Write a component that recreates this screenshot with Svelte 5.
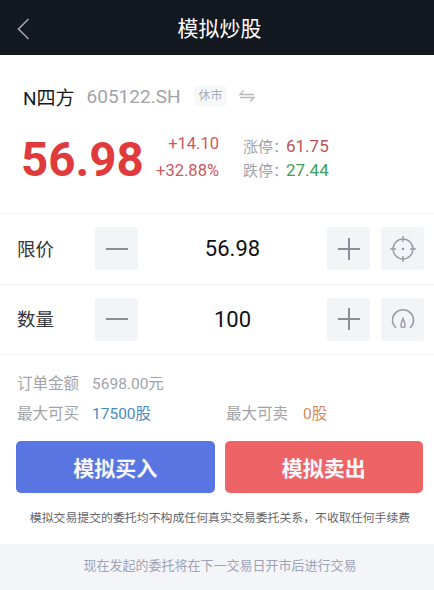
<script>
	let price = '56.98'
	let amount = '100'
</script>

<main>
	<header>
		<svg class="back" width="14" height="24" viewBox="0 0 14 24"><path d="M12.5 2 L2.5 12 L12.5 22" /></svg>
		<h1>模拟炒股</h1>
	</header>

	<section class="quote">
		<div class="name-row">
			<span class="name">N四方</span>
			<span class="code">605122.SH</span>
			<span class="tag">休市</span>
			<svg class="swap" width="16" height="14" viewBox="0 0 16 14"><path d="M5 1.5 L1 5.5 H15 M1 8.5 H15 L11 12.5" /></svg>
		</div>
		<div class="price-row">
			<div class="big">56.98</div>
			<div class="change">
				<span>+14.10</span>
				<span>+32.88%</span>
			</div>
			<div class="limits">
				<div>涨停：<b class="up">61.75</b></div>
				<div>跌停：<b class="down">27.44</b></div>
			</div>
		</div>
	</section>

	<section class="stepper">
		<span class="label">限价</span>
		<button class="sq" aria-label="minus"><svg width="24" height="24" viewBox="0 0 24 24"><path d="M1 12 H23" /></svg></button>
		<span class="value">{price}</span>
		<button class="sq" aria-label="plus"><svg width="24" height="24" viewBox="0 0 24 24"><path d="M1 12 H23 M12 1 V23" /></svg></button>
		<button class="sq extra" aria-label="target">
			<svg class="thin" width="28" height="28" viewBox="0 0 28 28">
				<circle cx="14" cy="14" r="10" />
				<path d="M14 1 V7 M14 21 V27 M1 14 H7 M21 14 H27" />
				<circle class="dot" cx="14" cy="14" r="1.3" />
			</svg>
		</button>
	</section>

	<section class="stepper">
		<span class="label">数量</span>
		<button class="sq" aria-label="minus"><svg width="24" height="24" viewBox="0 0 24 24"><path d="M1 12 H23" /></svg></button>
		<span class="value">{amount}</span>
		<button class="sq" aria-label="plus"><svg width="24" height="24" viewBox="0 0 24 24"><path d="M1 12 H23 M12 1 V23" /></svg></button>
		<button class="sq extra" aria-label="gauge">
			<svg class="thin" width="26" height="24" viewBox="0 0 26 24">
				<path d="M6 21 A10.5 10.5 0 1 1 20 21" />
				<path d="M13 11.5 C12 14 11 16 11 18.5 A2 2 0 0 0 15 18.5 C15 16 14 14 13 11.5 Z" />
			</svg>
		</button>
	</section>

	<section class="order">
		<div class="line"><span class="key">订单金额</span><span class="val">5698.00元</span></div>
		<div class="line">
			<div class="half"><span class="key">最大可买</span><span class="val blue">17500股</span></div>
			<div class="half"><span class="key">最大可卖</span><span class="val orange">0股</span></div>
		</div>
	</section>

	<div class="actions">
		<button class="act buy">模拟买入</button>
		<button class="act sell">模拟卖出</button>
	</div>

	<p class="note">模拟交易提交的委托均不构成任何真实交易委托关系，不收取任何手续费</p>

	<footer>现在发起的委托将在下一交易日开市后进行交易</footer>
</main>

<style>
	:global(body) {
		margin: 0;
		background: #fff;
	}
	main {
		width: 434px;
		height: 590px;
		overflow: hidden;
		font-family: Roboto, "Noto Sans CJK SC", sans-serif;
		color: #16191f;
	}
	section {
		box-sizing: border-box;
	}
	header {
		height: 55px;
		background: #141820;
		display: flex;
		align-items: center;
		justify-content: center;
		position: relative;
	}
	h1 {
		margin: -1px 0 0 5px;
		color: #fff;
		font-size: 21px;
		font-weight: 400;
	}
	.back {
		position: absolute;
		left: 16px;
		top: 17px;
	}
	.back path {
		fill: none;
		stroke: #a3a5a9;
		stroke-width: 1.6;
	}
	.quote {
		height: 159px;
		padding: 27px 0 0 23px;
		border-bottom: 1px solid #f3f4f6;
	}
	.name-row {
		display: flex;
		align-items: center;
		height: 28px;
	}
	.name {
		font-size: 19px;
	}
	.code {
		font-size: 19px;
		color: #a1a3a7;
		margin-left: 12px;
	}
	.tag {
		margin-left: 14px;
		background: #f7f8fa;
		color: #a8acb8;
		font-size: 12px;
		line-height: 20px;
		padding: 0 4px;
		border-radius: 2px;
	}
	.swap {
		margin-left: 12px;
	}
	.swap path {
		fill: none;
		stroke: #b6b8bd;
		stroke-width: 1.3;
	}
	.price-row {
		display: flex;
		margin-top: 13px;
		margin-left: -2px;
	}
	.big {
		font-size: 47.5px;
		font-weight: 700;
		color: #e13a3c;
		line-height: 58px;
		width: 132px;
		margin-top: 8px;
		white-space: nowrap;
	}
	.change {
		width: 66px;
		display: flex;
		flex-direction: column;
		align-items: flex-end;
		color: #c9595e;
		font-size: 16.5px;
		line-height: 27px;
		margin-top: 7px;
	}
	.limits {
		margin-left: 24px;
		font-size: 15px;
		line-height: 23px;
		color: #a1a3a7;
		margin-top: 12px;
		white-space: nowrap;
	}
	.limits b {
		font-weight: 400;
		font-size: 17px;
		margin-left: -2px;
	}
	.up {
		color: #bb5257;
	}
	.down {
		color: #3f9e5c;
	}
	.stepper {
		height: 70.5px;
		display: flex;
		align-items: center;
		padding-left: 17px;
		border-bottom: 1px solid #f3f4f6;
	}
	.label {
		width: 78px;
		font-size: 18.5px;
		color: #33363b;
		margin-top: -2px;
	}
	.sq {
		width: 43px;
		height: 43px;
		padding: 0;
		border: 0;
		border-radius: 3px;
		background: #f3f4f8;
		display: flex;
		align-items: center;
		justify-content: center;
	}
	.sq svg path {
		fill: none;
		stroke: #8b8e96;
		stroke-width: 2;
	}
	.sq svg.thin path,
	.sq svg.thin circle {
		fill: none;
		stroke: #9a9ca8;
		stroke-width: 1.5;
	}
	.sq svg.thin .dot {
		fill: #9a9ca8;
		stroke: none;
	}
	.value {
		width: 189px;
		text-align: center;
		font-size: 22px;
		color: #111;
	}
	.extra {
		margin-left: 11px;
	}
	.order {
		padding: 14px 17px 0;
		font-size: 15.5px;
		color: #a1a3a7;
	}
	.line {
		height: 30px;
		line-height: 30px;
		display: flex;
		white-space: nowrap;
	}
	.half {
		flex: none;
		width: 209px;
	}
	.key {
		margin-right: 13px;
	}
	.blue {
		color: #4a8ac0;
	}
	.orange {
		color: #d58a5f;
		margin-left: 2px;
	}
	.actions {
		display: flex;
		justify-content: space-between;
		padding: 12px 11px 0 16px;
	}
	.act {
		width: 198.5px;
		height: 52px;
		border: 0;
		border-radius: 5px;
		color: #f6f7fc;
		font-family: inherit;
		font-size: 21px;
		font-weight: 700;
		padding: 0;
	}
	.buy {
		background: #5975e2;
	}
	.sell {
		background: #ee6466;
	}
	.note {
		margin: 16px 0 0;
		padding-left: 6px;
		text-align: center;
		font-size: 11.9px;
		line-height: 18px;
		color: #63666c;
		white-space: nowrap;
	}
	footer {
		margin-top: 17px;
		padding-left: 6px;
		height: 46px;
		line-height: 44px;
		background: #f3f5f9;
		text-align: center;
		color: #9ea3b3;
		font-size: 13px;
	}
</style>
